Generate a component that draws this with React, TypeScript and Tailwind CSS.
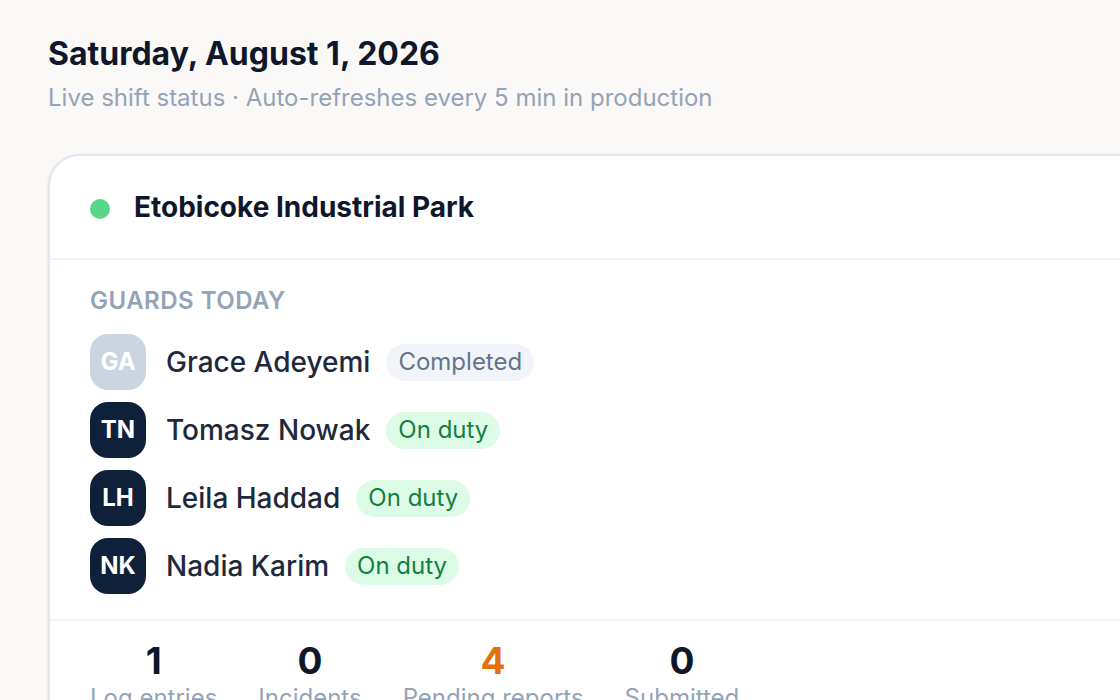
import React from 'react';

type Guard = { initials: string; name: string; status: 'completed' | 'on' };

const guards: Guard[] = [
  { initials: 'GA', name: 'Grace Adeyemi', status: 'completed' },
  { initials: 'TN', name: 'Tomasz Nowak', status: 'on' },
  { initials: 'LH', name: 'Leila Haddad', status: 'on' },
  { initials: 'NK', name: 'Nadia Karim', status: 'on' },
];

const stats = [
  { value: '1', label: 'Log entries', tone: 'text-[#0f172a]' },
  { value: '0', label: 'Incidents', tone: 'text-[#0f172a]' },
  { value: '4', label: 'Pending reports', tone: 'text-[#e4700c]' },
  { value: '0', label: 'Submitted', tone: 'text-[#0f172a]' },
];

export default function App() {
  return (
    <div className="min-h-screen h-[700px] overflow-hidden bg-[#faf9f7] px-12 pt-[34px] font-['Inter','Liberation_Sans',sans-serif]">
      <h1 className="text-[32px] leading-[40px] font-bold text-[#0f172a]">
        Saturday, August 1, 2026
      </h1>
      <p className="mt-[9px] text-[24px] leading-[30px] text-[#94a3b8]">
        Live shift status · Auto-refreshes every 5 min in production
      </p>

      {/* Site card */}
      <div className="mt-[41px] w-[1200px] bg-white border-2 border-[#e2e8f0] rounded-[32px] shadow-sm">
        <div className="flex items-center gap-6 h-[104px] px-10 border-b-2 border-[#eef2f6]">
          <span className="mt-[3px] w-5 h-5 rounded-full bg-[#5ad88a]" />
          <h2 className="text-[28px] leading-9 font-bold text-[#0f172a]">Etobicoke Industrial Park</h2>
        </div>

        <div className="px-10 pt-[26px] pb-[25px] border-b-2 border-[#f3f5f8]">
          <p className="text-[24px] leading-[30px] font-semibold uppercase tracking-[0.02em] text-[#94a3b8]">
            Guards today
          </p>
          <div className="mt-[18px] flex flex-col gap-3">
            {guards.map((g) => (
              <div key={g.initials} className="flex items-center h-14">
                <div
                  className={`w-14 h-14 shrink-0 rounded-[18px] flex items-center justify-center text-[24px] font-bold text-white ${
                    g.status === 'completed' ? 'bg-[#cbd5e1]' : 'bg-[#0f203b]'
                  }`}
                >
                  {g.initials}
                </div>
                <span className="ml-5 text-[28px] font-medium text-[#1e293b]">{g.name}</span>
                {g.status === 'completed' ? (
                  <span className="ml-4 px-3 h-[37px] flex items-center rounded-full bg-[#f1f5f9] text-[24px] text-[#64748b]">
                    Completed
                  </span>
                ) : (
                  <span className="ml-4 px-3 h-[37px] flex items-center rounded-full bg-[#dcfce7] text-[24px] text-[#15803d]">
                    On duty
                  </span>
                )}
              </div>
            ))}
          </div>
        </div>

        <div className="flex gap-[41px] px-10 pt-[18px] pb-8">
          {stats.map((s) => (
            <div key={s.label} className="flex flex-col items-center">
              <span className={`text-[37px] leading-[44px] font-bold ${s.tone}`}>{s.value}</span>
              <span className="text-[24px] leading-[30px] text-[#94a3b8]">{s.label}</span>
            </div>
          ))}
        </div>
      </div>
    </div>
  );
}
